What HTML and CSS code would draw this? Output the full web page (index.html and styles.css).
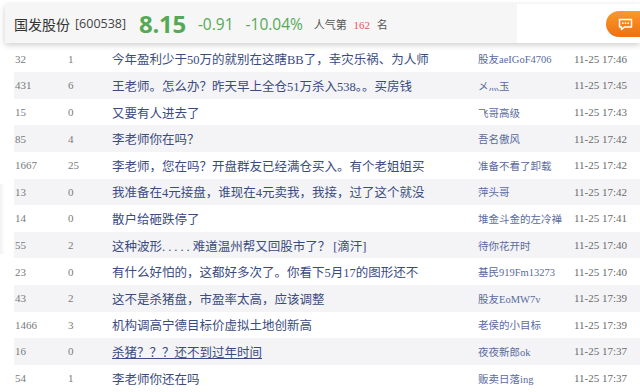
FILE: index.html
```html
<!DOCTYPE html>
<html lang="zh-CN">
<head>
  <meta charset="UTF-8" />
  <title>国发股份 股吧</title>
  <link rel="stylesheet" href="styles.css">
</head>
<body>
  <div class="quote-bar">
    <div class="quote">
      <span class="stock-name">国发股份</span>
      <span class="stock-code">[600538]</span>
      <span class="price">8.15</span>
      <span class="change">-0.91</span>
      <span class="change">-10.04%</span>
      <span class="rank">人气第 <em>162</em> 名</span>
    </div>
    <div class="actions">
      <button class="post-btn" aria-label="发帖">
        <svg width="15" height="13" viewBox="0 0 15 13">
          <path d="M1.5 1.5h12v7.5h-7l-3 2.5v-2.5h-2z" fill="none" stroke="#fff" stroke-width="1.5" stroke-linejoin="round"/>
          <circle cx="4.8" cy="5.2" r="0.9" fill="#fff"/>
          <circle cx="7.5" cy="5.2" r="0.9" fill="#fff"/>
          <circle cx="10.2" cy="5.2" r="0.9" fill="#fff"/>
        </svg>
      </button>
    </div>
  </div>

  <div class="side-shade"></div>

  <ul class="post-list">
    <li class="post"><span class="reads">32</span><span class="replies">1</span><span class="title">今年盈利少于50万的就别在这瞎BB了，幸灾乐祸、为人师</span><span class="author">股友aeIGoF4706</span><span class="time">11-25 17:46</span></li>
    <li class="post"><span class="reads">431</span><span class="replies">6</span><span class="title">王老师。怎么办？昨天早上全仓51万杀入538。。买房钱</span><span class="author">メ灬玉</span><span class="time">11-25 17:45</span></li>
    <li class="post"><span class="reads">15</span><span class="replies">0</span><span class="title">又要有人进去了</span><span class="author">飞哥高级</span><span class="time">11-25 17:43</span></li>
    <li class="post"><span class="reads">85</span><span class="replies">4</span><span class="title">李老师你在吗？</span><span class="author">吾名傲风</span><span class="time">11-25 17:42</span></li>
    <li class="post"><span class="reads">1667</span><span class="replies">25</span><span class="title">李老师，您在吗？开盘群友已经满仓买入。有个老姐姐买</span><span class="author">准备不看了卸载</span><span class="time">11-25 17:42</span></li>
    <li class="post"><span class="reads">13</span><span class="replies">0</span><span class="title">我准备在4元接盘，谁现在4元卖我，我接，过了这个就没</span><span class="author">萍头哥</span><span class="time">11-25 17:42</span></li>
    <li class="post"><span class="reads">14</span><span class="replies">0</span><span class="title">散户给砸跌停了</span><span class="author">堆金斗金的左冷禅</span><span class="time">11-25 17:41</span></li>
    <li class="post"><span class="reads">55</span><span class="replies">2</span><span class="title">这种波形<span class="dots">.....</span>难道温州帮又回股市了？<span class="wide">[滴汗]</span></span><span class="author">待你花开时</span><span class="time">11-25 17:40</span></li>
    <li class="post"><span class="reads">23</span><span class="replies">0</span><span class="title">有什么好怕的，这都好多次了。你看下5月17的图形还不</span><span class="author">基民919Fm13273</span><span class="time">11-25 17:40</span></li>
    <li class="post"><span class="reads">43</span><span class="replies">2</span><span class="title">这不是杀猪盘，市盈率太高，应该调整</span><span class="author">股友EoMW7v</span><span class="time">11-25 17:39</span></li>
    <li class="post"><span class="reads">1466</span><span class="replies">3</span><span class="title">机构调高宁德目标价虚拟土地创新高</span><span class="author">老侯的小目标</span><span class="time">11-25 17:39</span></li>
    <li class="post"><span class="reads">16</span><span class="replies">0</span><span class="title hover">杀猪？？？还不到过年时间</span><span class="author">夜夜新郎ok</span><span class="time">11-25 17:37</span></li>
    <li class="post"><span class="reads">54</span><span class="replies">1</span><span class="title">李老师你还在吗</span><span class="author">贩卖日落ing</span><span class="time">11-25 17:37</span></li>
  </ul>
</body>
</html>
```

FILE: styles.css
```css
body {
  margin: 0;
  background: #ffffff;
  font-family: "Liberation Serif", "Noto Sans CJK SC", serif;
  overflow: hidden;
}

.quote-bar {
  display: flex;
  height: 39px;
  margin: 4px 0 0 5px;
  box-shadow: 0 2px 6px rgba(0, 0, 0, 0.2);
  position: relative;
  z-index: 2;
}

.quote {
  flex: 0 0 503px;
  display: flex;
  align-items: center;
  padding-left: 9px;
  background: #f6f6f6;
  white-space: nowrap;
}

.stock-name {
  font-family: "Noto Sans CJK SC", sans-serif;
  font-size: 14px;
  color: #333;
}

.stock-code {
  font-family: "Open Sans", sans-serif;
  font-size: 12.5px;
  color: #444;
  margin-left: 5px;
}

.price {
  font-family: "Open Sans", sans-serif;
  font-size: 24px;
  font-weight: 700;
  color: #55a955;
  margin-left: 13px;
  letter-spacing: -0.3px;
}

.change {
  font-family: "Open Sans", sans-serif;
  font-size: 15.5px;
  color: #55a955;
  margin-left: 12px;
}

.rank {
  font-size: 11px;
  color: #555;
  margin-left: 11px;
}

.rank em {
  font-style: normal;
  color: #e0595b;
  margin: 0 4px;
}

.actions {
  flex: 1;
  display: flex;
  align-items: center;
  justify-content: flex-end;
  background: #ffffff;
}

.post-btn {
  width: 34px;
  height: 26px;
  margin-top: 1px;
  border: none;
  border-radius: 13px 0 0 13px;
  background: linear-gradient(180deg, #f79a2c, #f0700e);
  display: flex;
  align-items: center;
  justify-content: center;
  padding: 0 0 0 4px;
}

.side-shade {
  position: absolute;
  left: 0;
  top: 184px;
  width: 5px;
  height: 70px;
  background: linear-gradient(90deg, rgba(0, 0, 0, 0.05), rgba(0, 0, 0, 0));
}

.post-list {
  list-style: none;
  margin: 2.6px 0 0 14px;
  padding: 0;
}

.post {
  display: flex;
  align-items: center;
  height: 26.6px;
  white-space: nowrap;
}

.post:nth-child(even) {
  background: #f4f4f6;
}

.reads {
  width: 53px;
  padding-left: 1px;
  font-size: 11px;
  color: #7a7a7a;
}

.replies {
  width: 44px;
  font-size: 11px;
  color: #7a7a7a;
}

.title {
  width: 366px;
  font-size: 12.5px;
  color: #3a4b80;
  overflow: hidden;
}

.title .dots {
  letter-spacing: 3px;
}

.title .wide {
  margin-left: 3px;
}

.title.hover {
  text-decoration: underline;
}

.author {
  width: 96px;
  font-size: 10.5px;
  color: #5a6b9e;
  overflow: hidden;
}

.time {
  font-size: 11px;
  color: #6a6a6a;
}
```
